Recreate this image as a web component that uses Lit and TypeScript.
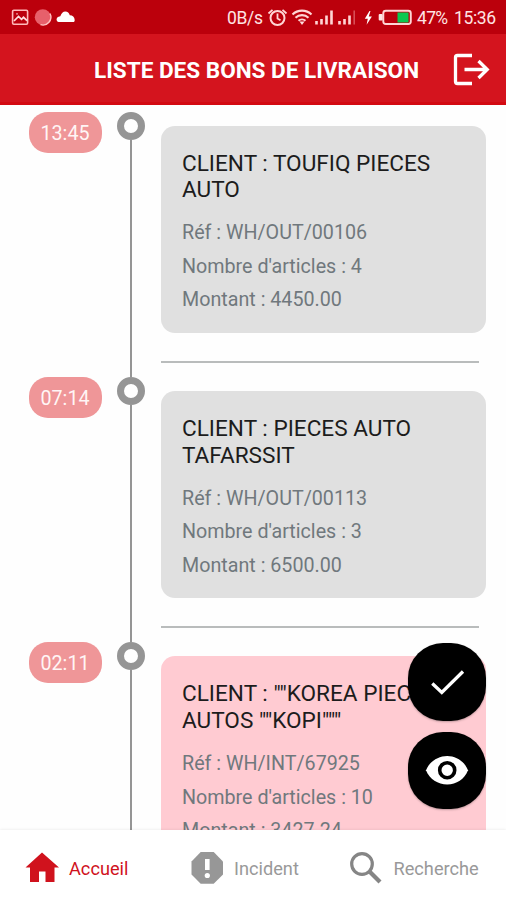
import { LitElement, html, css } from "lit";
import { customElement, property } from "lit/decorators.js";

interface Delivery {
  time: string;
  client: string[];
  ref: string;
  count: number;
  amount: string;
  alert?: boolean;
}

const deliveries: Delivery[] = [
  { time: "13:45", client: ["TOUFIQ PIECES", "AUTO"], ref: "WH/OUT/00106", count: 4, amount: "4450.00" },
  { time: "07:14", client: ["PIECES AUTO", "TAFARSSIT"], ref: "WH/OUT/00113", count: 3, amount: "6500.00" },
  { time: "02:11", client: ['""KOREA PIECES', 'AUTOS ""KOPI"""'], ref: "WH/INT/67925", count: 10, amount: "3427.24", alert: true },
];

@customElement("status-bar")
class StatusBar extends LitElement {
  static styles = css`
    :host { display: flex; height: 34px; background: #bb000c; color: #ffe4e4; font-size: 17.5px; line-height: 36px; }
    svg { display: block; flex: none; }
    .left { width: 227px; }
    .text { white-space: nowrap; }
    .rate { width: 40px; letter-spacing: -0.35px; }
    .icons { width: 150px; }
    .pct { width: 37px; letter-spacing: -0.7px; }
    .clock { letter-spacing: -0.35px; }
  `;
  render() {
    return html`
      <svg class="left" width="227" height="34" viewBox="0 0 227 34" fill="none">
        <rect x="12.6" y="10.3" width="15" height="14" rx="1.2" stroke="#ffb9b9" stroke-width="1.6" />
        <path d="M14 21l4.500-4.500 3 2.800 2-2 3.500 3.400M16.500 13.800h1" stroke="#ffdede" stroke-width="1.7" />
        <circle cx="42.8" cy="17.2" r="8" fill="#e7606b" />
        <path d="M50 13.5a8 8 0 0 1-9.5 11.2" stroke="#ffc2c2" stroke-width="1.4" />
        <path d="M58.500 22a2.700 2.700 0 0 1 0-5.200c.8-.2 1.200-.2 1.800-.6 1.200-3 2.700-4.700 5-4.700 2.300 0 3.900 1.600 4.500 3.800 2.800 0 4.800 1.800 4.900 4.600 0 1.300-.5 2.100-1.400 2.100z" fill="#fff" />
      </svg>
      <span class="text rate">0B/s</span>
      <svg class="icons" width="150" height="34" viewBox="267 0 150 34" fill="none" stroke="#ffd5d5">
        <circle cx="277.500" cy="18" r="7" stroke-width="2" />
        <path d="M277.500 13.500v5l3 1.800M268.500 13.500l4-3.700M286.500 13.500l-4-3.700" stroke-width="1.8" />
        <path d="M292.500 14.500a13.500 13.500 0 0 1 19 0M295.500 17.800a9.300 9.300 0 0 1 13 0M298.500 20.800a5.200 5.200 0 0 1 7 0" stroke-width="2.1" />
        <path d="M299.500 21.500h5L302 25z" fill="#ffe0e0" stroke="none" />
        <path d="M316.500 21V24.500M321.500 19v5.500M326.500 15.500V24.500M331.500 10.500V24.500M339.500 21V24.500M344.500 19v5.500M349.500 15.500V24.500" stroke-width="2.600" />
        <path d="M354.200 10.500V24.500" stroke="#d9545c" stroke-width="1.500" />
        <path d="M369.500 11l-4.700 7.800h3l-1.200 6 5.300-8.300h-3.200l1.800-5.500z" fill="#fff" stroke="none" />
        <rect x="383.300" y="10.800" width="27.500" height="13.200" rx="2.500" stroke-width="1.900" />
        <rect x="378.700" y="14" width="4" height="6.500" rx="1" fill="#ffe5e5" stroke="none" />
        <rect x="397.500" y="12.500" width="11" height="10" fill="#0cc850" stroke="none" />
      </svg>
      <span class="text pct">47%</span>
      <span class="text clock">15:36</span>
    `;
  }
}

@customElement("delivery-row")
class DeliveryRow extends LitElement {
  @property({ attribute: false }) item!: Delivery;
  static styles = css`
    :host { display: grid; grid-template-columns: 117px 28px 1fr; height: 265.4px; flex: none; }
    .pill {
      box-sizing: border-box; width: 73px; height: 41px; margin-left: 28.5px; border-radius: 19px;
      background: #ef9698; color: #fff5f5; font-size: 19.7px; line-height: 43px; text-align: center;
    }
    .track { display: flex; flex-direction: column; align-items: center; }
    .ring { box-sizing: border-box; width: 28px; height: 28px; border: 7px solid #959595; border-radius: 50%; flex: none; }
    .line { width: 2.5px; flex: 1; background: #959595; }
    .card {
      box-sizing: border-box; height: 207.5px; margin: 14px 20.5px 0 16px; padding: 25px 0 0 21px;
      background: #e0e0e0; border-radius: 14px; overflow: hidden; white-space: nowrap;
    }
    .alert { background: #ffcbd2; }
    .title { color: #1c1c1c; font-size: 22.6px; line-height: 26.7px; }
    .info { color: #70787d; font-size: 19.7px; line-height: 33.5px; }
    .details { margin-top: 12.4px; }
    .rule { height: 2px; margin: 27.5px 27px 0 16px; background: #b9bcbc; }
  `;
  render() {
    const d = this.item;
    return html`
      <div class="pill">${d.time}</div>
      <div class="track"><div class="ring"></div><div class="line"></div></div>
      <div>
        <div class="card ${d.alert ? "alert" : ""}">
          <div class="title">CLIENT : ${d.client[0]}</div>
          <div class="title">${d.client[1]}</div>
          <div class="details">
            <div class="info">Réf : ${d.ref}</div>
            <div class="info">Nombre d'articles : ${d.count}</div>
            <div class="info">Montant : ${d.amount}</div>
          </div>
        </div>
        <div class="rule"></div>
      </div>
    `;
  }
}

@customElement("app-root")
class AppRoot extends LitElement {
  static styles = css`
    :host { display: flex; flex-direction: column; position: relative; height: 900px; overflow: hidden; background: #fefefe; font-family: Roboto, "Liberation Sans", sans-serif; }
    header { box-sizing: border-box; display: flex; align-items: center; height: 70.5px; flex: none; background: #d4141e; border-bottom: 3px solid #d30a12; color: #fff; }
    h1 { margin: 7px 0 0 94px; width: 356px; font-size: 22.55px; line-height: 28px; font-weight: 700; white-space: nowrap; }
    .list { display: flex; flex-direction: column; flex: 1; min-height: 0; padding-top: 7px; overflow: hidden; }
    nav { display: flex; height: 70px; flex: none; background: #fff; box-shadow: 0 0 3px rgba(0,0,0,.1); position: relative; color: #999; font-size: 18.2px; }
    svg { display: block; flex: none; }
    header svg { margin-top: 5px; }
    .tab { display: flex; align-items: center; padding-top: 7px; box-sizing: border-box; white-space: nowrap; }
    .tab svg { margin-top: -2px; }
    .home { width: 190px; padding-left: 24px; gap: 10px; color: #d0121d; }
    .incident { width: 159px; gap: 10px; }
    .search { gap: 10.5px; }
    .fabs { position: absolute; left: 408px; top: 643px; display: flex; flex-direction: column; gap: 11px; }
    .fab { width: 78px; height: 77.5px; border-radius: 35px; background: #000; display: flex; align-items: center; justify-content: center; box-shadow: 0 1px 2px rgba(0,0,0,.25); }
  `;
  render() {
    return html`
      <status-bar></status-bar>
      <header>
        <h1>LISTE DES BONS DE LIVRAISON</h1>
        <svg width="42" height="40" viewBox="450 50 42 40" fill="none" stroke="#fff" stroke-width="3.300">
          <path d="M472 55.500H457.500Q455.500 55.500 455.500 57.500V81.500Q455.500 83.500 457.500 83.500H472M464.500 69.500H487M478.500 61l8.700 8.500-8.700 8.500" />
        </svg>
      </header>
      <div class="list">${deliveries.map((d) => html`<delivery-row .item=${d}></delivery-row>`)}</div>
      <nav>
        <div class="tab home">
          <svg width="35" height="34" viewBox="23.500 851 35 34" fill="currentColor"><path d="M41.500 852.500L25 867.500H29.500V882H38.500V871.500H45V882H54V867.500H58.500Z" /></svg>
          <span>Accueil</span>
        </div>
        <div class="tab incident">
          <svg width="34" height="34" viewBox="190 851 34 34"><path d="M200.700 852h13l9.300 9.500v13l-9.300 9.300h-13l-9.200-9.300v-13z" fill="#979797" /><path d="M205 859h4.600v11H205z" fill="#fff" /><circle cx="207.300" cy="875.500" r="2.600" fill="#fff" /></svg>
          <span>Incident</span>
        </div>
        <div class="tab search">
          <svg width="34" height="34" viewBox="348.500 851 34 34" fill="none" stroke="#858585"><circle cx="361.500" cy="864" r="10.300" stroke-width="3.200" /><path d="M368.500 871l11 11" stroke-width="4.200" /></svg>
          <span>Recherche</span>
        </div>
      </nav>
      <div class="fabs">
        <div class="fab"><svg width="78" height="78" viewBox="408 643 78 78" fill="none"><path d="M432.300 683.500l9.500 9L463 671.500" stroke="#fff" stroke-width="3.300" /></svg></div>
        <div class="fab"><svg width="78" height="78" viewBox="408 731.500 78 78"><path d="M426 770.700C429.500 762 438 756.400 447.200 756.400S464.500 762 468 770.700C464.500 779.500 456.400 785 447.200 785S429.500 779.500 426 770.700Z" fill="#fff" /><circle cx="447.200" cy="770.700" r="7.500" fill="#fff" stroke="#000" stroke-width="3.600" /></svg></div>
      </div>
    `;
  }
}
